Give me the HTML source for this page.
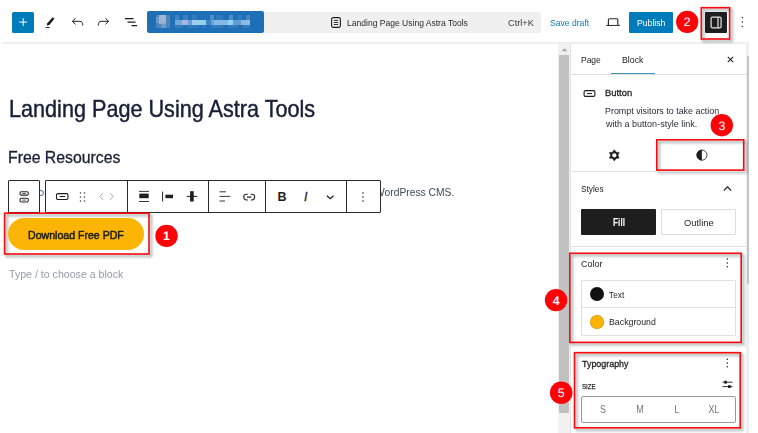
<!DOCTYPE html>
<html><head><meta charset="utf-8"><title>Landing Page Using Astra Tools</title>
<style>
*{box-sizing:border-box;margin:0;padding:0}
html,body{width:758px;height:433px;overflow:hidden;background:#fff}
body{font-family:"Liberation Sans",sans-serif;color:#1e1e1e;position:relative}
.a{position:absolute}
.t{position:absolute;white-space:nowrap;line-height:1;transform-origin:0 0}
svg{position:absolute;overflow:visible}
.rbx{filter:drop-shadow(2px 2px 1.8px rgba(30,55,55,.55))}
.mz{position:absolute;left:0;top:0;width:117px;height:22px;filter:blur(.7px)}
.mz i{position:absolute;display:block}
</style></head><body>

<!-- header -->
<div class="a" id="hdrline" style="left:2px;top:42px;width:747px;height:2px;background:#efefef"></div>
<div class="a" id="plus" style="left:12px;top:12px;width:22px;height:21px;background:#007cba;border-radius:1.500px"></div>
<svg style="left:19px;top:18px" width="8" height="8" viewBox="0 0 8 8"><path d="M4.200 .2v7.800M.3 4.100h7.800" stroke="#fff" stroke-width="1" fill="none"/></svg>
<!-- pencil -->
<svg style="left:44px;top:16px" width="12" height="13" viewBox="0 0 12 13"><path d="M8.6 1.2l1.9 1.6-5.2 6.1-2.6.9.6-2.6z" fill="#1e1e1e"/><path d="M1.5 11.6h4.2" stroke="#1e1e1e" stroke-width="1"/></svg>
<!-- undo -->
<svg style="left:71px;top:17px" width="13" height="10" viewBox="0 0 13 10"><path d="M4.6 1.2L1.4 4.3l3.2 3.1M1.6 4.3h7.2c1.8 0 2.9 1.4 2.9 3.6v.6" stroke="#1e1e1e" stroke-width="1" fill="none"/></svg>
<!-- redo -->
<svg style="left:97px;top:17px" width="13" height="10" viewBox="0 0 13 10"><path d="M8.4 1.2l3.2 3.1-3.2 3.1M11.4 4.3H4.2C2.400 4.300 1.300 5.700 1.300 7.900v.6" stroke="#1e1e1e" stroke-width="1" fill="none"/></svg>
<!-- list view -->
<svg style="left:124px;top:17px" width="14" height="10" viewBox="0 0 14 10"><path d="M.9 1.500h8.600M3.500 5.100h8M7.500 8.700h5.600" stroke="#1e1e1e" stroke-width="1.250" fill="none"/></svg>

<!-- blurred blue -->
<div class="a" id="blue" style="left:147px;top:11px;width:117px;height:22px;background:#1f6fb7;border-radius:2px;overflow:hidden"><div class="mz"><i style="left:9.1px;top:4.4px;width:14.2px;height:12.9px;background:rgba(150,175,205,.35)"></i><i style="left:12.2px;top:4.4px;width:6.9px;height:8.6px;background:rgba(185,200,220,.75)"></i><i style="left:9.1px;top:5.6px;width:4.8px;height:6.5px;background:rgba(150,175,205,.5)"></i><i style="left:13.9px;top:11.3px;width:5.1px;height:6.0px;background:rgba(140,165,195,.6)"></i><i style="left:19.0px;top:5.3px;width:4.3px;height:6.9px;background:rgba(90,135,185,.6)"></i><i style="left:27.6px;top:9.1px;width:7.7px;height:4.5px;background:#6fa8dc"></i><i style="left:35.3px;top:9.1px;width:6.0px;height:4.5px;background:#a9b7e0"></i><i style="left:41.3px;top:9.1px;width:3.4px;height:4.5px;background:#6b9fd6"></i><i style="left:44.7px;top:9.1px;width:9.4px;height:4.5px;background:#9fcdf0"></i><i style="left:54.2px;top:9.1px;width:5.1px;height:4.5px;background:#8fd0e8"></i><i style="left:59.3px;top:9.1px;width:4.3px;height:4.5px;background:#3f85c6"></i><i style="left:63.6px;top:9.1px;width:3.4px;height:4.5px;background:#6b9fd6"></i><i style="left:67.0px;top:9.1px;width:13.7px;height:4.5px;background:#86b8e4"></i><i style="left:80.8px;top:9.1px;width:5.1px;height:4.5px;background:#8fd4ee"></i><i style="left:85.9px;top:9.1px;width:7.7px;height:4.5px;background:#5f9bd3"></i><i style="left:93.6px;top:9.1px;width:9.4px;height:4.5px;background:#8cbce6"></i><i style="left:27.6px;top:4.4px;width:4.3px;height:4.6px;background:rgba(120,170,220,0.35)"></i><i style="left:36.2px;top:4.4px;width:5.1px;height:4.6px;background:rgba(120,170,220,0.3)"></i><i style="left:44.7px;top:4.4px;width:5.1px;height:4.6px;background:rgba(120,170,220,0.2)"></i><i style="left:62.8px;top:4.4px;width:4.3px;height:4.6px;background:rgba(120,170,220,0.5)"></i><i style="left:68.8px;top:4.4px;width:6.9px;height:4.6px;background:rgba(120,170,220,0.2)"></i><i style="left:81.6px;top:4.4px;width:4.3px;height:4.6px;background:rgba(120,170,220,0.5)"></i><i style="left:91.1px;top:4.4px;width:4.3px;height:4.6px;background:rgba(120,170,220,0.2)"></i><i style="left:98.8px;top:4.4px;width:4.3px;height:4.6px;background:rgba(120,170,220,0.4)"></i><i style="left:27.6px;top:13.5px;width:8.6px;height:3.8px;background:rgba(100,155,210,0.3)"></i><i style="left:39.6px;top:13.5px;width:12.0px;height:3.8px;background:rgba(100,155,210,0.25)"></i><i style="left:54.2px;top:13.5px;width:5.1px;height:3.8px;background:rgba(100,155,210,0.2)"></i><i style="left:63.6px;top:13.5px;width:12.0px;height:3.8px;background:rgba(100,155,210,0.3)"></i><i style="left:80.8px;top:13.5px;width:10.3px;height:3.8px;background:rgba(100,155,210,0.25)"></i><i style="left:96.2px;top:13.5px;width:6.9px;height:3.8px;background:rgba(100,155,210,0.3)"></i></div></div>
<!-- doc bar -->
<div class="a" id="docbar" style="left:264px;top:12px;width:277px;height:21px;background:#f0f0f0;border-radius:0 2px 2px 0"></div>
<svg style="left:331px;top:17px" width="10" height="11" viewBox="0 0 10 11"><rect x=".6" y=".6" width="8.800" height="9.800" rx="1.600" fill="none" stroke="#1e1e1e" stroke-width="1.100"/><path d="M2.800 3.500h4.400M2.800 5.500h4.400M2.800 7.500h4.400" stroke="#1e1e1e" stroke-width=".9"/></svg>
<span class="t" id="t_doc" style="left:346.82px;top:18.09px;font-size:9.8px;color:#2a2a2a;transform:scaleX(0.8713)">Landing Page Using Astra Tools</span>
<span class="t" id="t_ctrl" style="left:507.53px;top:18.09px;font-size:9.8px;color:#3a3a3a;transform:scaleX(0.9383)">Ctrl+K</span>
<span class="t" id="t_save" style="left:549.72px;top:18.09px;font-size:9.8px;color:#1278b8;transform:scaleX(0.8773)">Save draft</span>
<!-- laptop -->
<svg style="left:605px;top:17px" width="16" height="10" viewBox="0 0 16 10"><path d="M3.400 8.300V2.700a1 1 0 0 1 1-1h7.400a1 1 0 0 1 1 1V8.300" stroke="#2a2a2a" stroke-width="1.150" fill="none"/><path d="M1.300 8.450h13.600" stroke="#2a2a2a" stroke-width="1" fill="none"/></svg>
<div class="a" id="publish" style="left:629px;top:12px;width:44px;height:21px;background:#007cba;border-radius:1px"></div>
<span class="t" id="t_pub" style="left:636.99px;top:18.01px;font-size:9.8px;color:#fff;transform:scaleX(0.8846)">Publish</span>
<svg style="left:675px;top:9px" width="26" height="26" viewBox="0 0 26 26"><circle cx="12.20" cy="12.90" r="11.1" fill="#fd0207"/><text x="12.20" y="17.35" text-anchor="middle" text-rendering="geometricPrecision" font-family="Liberation Sans, sans-serif" font-size="12.3" font-weight="400" fill="#fff">2</text></svg>
<svg class="rbx" style="left:699px;top:5px" width="33" height="36" viewBox="0 0 33 36"><rect x="2.30" y="2.70" width="28.30" height="31.30" fill="none" stroke="#fb0a0f" stroke-width="1.6"/></svg>
<div class="a" style="left:705px;top:12px;width:22px;height:21px;background:#1e1e1e;border-radius:1px"></div>
<svg style="left:710px;top:17px" width="12" height="11" viewBox="0 0 12 11"><rect x="1.100" y=".2" width="10" height="10.600" rx="1.300" fill="none" stroke="#e6e6e6" stroke-width="1.200"/><path d="M8 .2v10.600" stroke="#e6e6e6" stroke-width="1.200"/></svg>
<svg style="left:741px;top:16px" width="3" height="12" viewBox="0 0 3 12"><circle cx="1.300" cy="1.500" r=".75" fill="#333"/><circle cx="1.300" cy="6" r=".75" fill="#333"/><circle cx="1.300" cy="10.500" r=".75" fill="#333"/></svg>

<!-- content -->
<span class="t" id="t_h1" style="left:8.71px;top:98.11px;font-size:23.2px;color:#182036;-webkit-text-stroke:.45px #182036;transform:scaleX(0.9325)">Landing Page Using Astra Tools</span>
<span class="t" id="t_h2" style="left:8.31px;top:150.10px;font-size:16px;color:#182036;-webkit-text-stroke:.3px #182036;transform:scaleX(0.9871)">Free Resources</span>
<span class="t" id="t_wp" style="left:374.64px;top:187.12px;font-size:10.6px;color:#3d4b5c;transform:scaleX(.9716)">WordPress CMS.</span>

<!-- block toolbar -->
<div class="a" style="left:8px;top:180px;width:32px;height:33px;border:1px solid #2a2a2a;border-radius:1px;background:#fff"></div>
<div class="a" style="left:40px;top:190px;width:4px;height:6px;overflow:hidden"><div class="a" style="left:-2px;top:0;width:6px;height:6px;border:1px solid #3a6fa8;border-radius:50%"></div></div>
<div class="a" id="tb" style="left:45px;top:180px;width:336px;height:33px;border:1px solid #2a2a2a;border-radius:1px;background:#fff"></div>
<div class="a" style="left:127px;top:180px;width:1px;height:33px;background:#2a2a2a"></div>
<div class="a" style="left:208px;top:180px;width:1px;height:33px;background:#2a2a2a"></div>
<div class="a" style="left:265px;top:180px;width:1px;height:33px;background:#2a2a2a"></div>
<div class="a" style="left:346px;top:180px;width:1px;height:33px;background:#2a2a2a"></div>
<!-- buttons group icon -->
<svg style="left:19px;top:191px" width="10" height="12" viewBox="0 0 10 12"><rect x="1.050" y=".75" width="8.200" height="3.400" rx="1.100" fill="none" stroke="#2a2a2a" stroke-width="1.100"/><rect x="1.050" y="7.250" width="8.200" height="3.700" rx="1.100" fill="none" stroke="#2a2a2a" stroke-width="1.100"/><path d="M3.400 2.450h3.500M3.400 9.100h3.500" stroke="#2a2a2a" stroke-width=".8"/></svg>
<!-- button icon -->
<svg style="left:55px;top:192px" width="13" height="7" viewBox="0 0 13 7"><g transform="translate(0.900 1.000)"><rect x=".6" y=".6" width="11.500" height="5.900" rx="1.400" fill="none" stroke="#1e1e1e" stroke-width="1.100"/><path d="M3.800 3.500h5.400" stroke="#1e1e1e" stroke-width="1"/></g></svg>
<!-- drag dots -->
<svg style="left:79px;top:192px" width="6" height="10" viewBox="0 0 6 10"><g transform="translate(0.500 0.000)"><g fill="#444"><circle cx="1" cy="1" r=".8"/><circle cx="5" cy="1" r=".8"/><circle cx="1" cy="5" r=".8"/><circle cx="5" cy="5" r=".8"/><circle cx="1" cy="9" r=".8"/><circle cx="5" cy="9" r=".8"/></g></g></svg>
<!-- < > -->
<svg style="left:99px;top:192px" width="15" height="8" viewBox="0 0 15 8"><g transform="translate(0.000 0.500)"><path d="M4.200 .5L.8 4l3.400 3.500M10.800 .5L14.200 4l-3.400 3.500" fill="none" stroke="#a0a0a0" stroke-width=".9"/></g></svg>
<!-- align top -->
<svg style="left:139px;top:191px" width="10" height="11" viewBox="0 0 10 11"><path d="M0 .4h10" stroke="#1e1e1e" stroke-width=".9"/><rect x=".3" y="2.600" width="9.400" height="4.600" fill="#1e1e1e"/><path d="M0 10.500h10" stroke="#1e1e1e" stroke-width=".9"/></svg>
<!-- justify left -->
<svg style="left:162px;top:191px" width="11" height="11" viewBox="0 0 11 11"><path d="M.6 .6v9.900" stroke="#1e1e1e" stroke-width="1"/><rect x="3.400" y="3.700" width="7.600" height="3.500" fill="#1e1e1e"/></svg>
<!-- cross -->
<svg style="left:186px;top:190px" width="11" height="12" viewBox="0 0 11 12"><g transform="translate(0.400 0.500)"><rect x="3.700" y=".7" width="3.600" height="10.300" fill="#1e1e1e"/><path d="M.3 5.900h10.600" stroke="#1e1e1e" stroke-width="1"/></g></svg>
<!-- align text -->
<svg style="left:219px;top:191px" width="11" height="11" viewBox="0 0 11 11"><g transform="translate(0.500 0.000)"><path d="M0 .8h6.500M0 5.400h10.800M0 10h5.500" stroke="#3a3a3a" stroke-width="1"/></g></svg>
<!-- link -->
<svg style="left:242px;top:192px" width="13" height="8" viewBox="0 0 13 8"><g transform="translate(0.800 1.300)"><path d="M5 .9H3.800a2.900 2.900 0 0 0 0 5.800H5M7.800 .9h1.200a2.900 2.900 0 0 1 0 5.800H7.800M4.200 3.800h4.400" fill="none" stroke="#2a2a2a" stroke-width="1.100"/></g></svg>
<span class="t" id="t_B" style="left:277.500px;top:191px;font-size:12.500px;font-weight:700;color:#1e1e1e">B</span>
<span class="t" id="t_I" style="left:304px;top:191px;font-size:12.500px;font-style:italic;color:#1e1e1e;-webkit-text-stroke:.3px #1e1e1e">I</span>
<svg style="left:326px;top:195px" width="8" height="4" viewBox="0 0 8 4"><path d="M.9 .8L4.200 3.700 7.500 .8" fill="none" stroke="#1e1e1e" stroke-width="1.250"/></svg>
<svg style="left:362px;top:192px" width="2" height="10" viewBox="0 0 2 10"><g fill="#222"><circle cx="1" cy="1" r=".8"/><circle cx="1" cy="5" r=".8"/><circle cx="1" cy="9" r=".8"/></g></svg>

<!-- button -->
<svg class="rbx" style="left:2px;top:211px" width="149" height="45" viewBox="0 0 149 45"><rect x="2.60" y="2.20" width="144.40" height="40.80" fill="none" stroke="#fb0a0f" stroke-width="1.6"/></svg>
<div class="a" id="btn" style="left:8px;top:218px;width:136px;height:32px;border-radius:16px;background:#fcb505"></div>
<span class="t" id="t_btn" style="left:28.11px;top:229.61px;font-size:10.8px;color:#1e1e1e;-webkit-text-stroke:.5px #1e1e1e;transform:scaleX(0.9798)">Download Free PDF</span>
<svg style="left:154px;top:223px" width="26" height="26" viewBox="0 0 26 26"><circle cx="12.50" cy="12.90" r="11.2" fill="#fd0207"/><text x="12.50" y="17.35" text-anchor="middle" text-rendering="geometricPrecision" font-family="Liberation Sans, sans-serif" font-size="12.3" font-weight="700" fill="#fff">1</text></svg>
<span class="t" id="t_type" style="left:8.80px;top:270.00px;font-size:10.4px;color:#949dab;transform:scaleX(1.0205)">Type / to choose a block</span>

<!-- scrollbar -->
<div class="a" style="left:558px;top:43px;width:12px;height:390px;background:#f1f1f1"></div>
<div class="a" style="left:559px;top:55px;width:10px;height:358px;background:#c1c1c1"></div>
<svg style="left:561px;top:48px" width="7" height="4" viewBox="0 0 7 4"><path d="M.5 3.300L3.500 .2 6.500 3.300z" fill="#ababab"/></svg>

<!-- sidebar -->
<div class="a" style="left:570px;top:43px;width:1px;height:390px;background:#e2e2e2"></div>
<div class="a" style="left:746px;top:43px;width:3px;height:390px;background:#eee"></div>
<div class="a" style="left:747px;top:56px;width:2px;height:228px;background:#c4c4c4"></div>
<div class="a" style="left:571px;top:73.500px;width:175px;height:1px;background:#e0e0e0"></div>
<div class="a" style="left:611px;top:73px;width:43.500px;height:1px;background:#3a95cc"></div>
<span class="t" id="t_page" style="left:581.19px;top:55.09px;font-size:9.8px;transform:scaleX(0.8644)">Page</span>
<span class="t" id="t_block" style="left:621.79px;top:55.09px;font-size:9.8px;transform:scaleX(0.8957)">Block</span>
<svg style="left:727px;top:56px" width="6" height="6" viewBox="0 0 6 6"><g transform="translate(0.500 0.500)"><path d="M.3 .3l5.400 5.400M5.700 .3L.3 5.700" stroke="#1e1e1e" stroke-width="1.050" fill="none"/></g></svg>
<svg style="left:583px;top:90px" width="12" height="7" viewBox="0 0 12 7"><g transform="translate(0.500 0.000)"><rect x=".6" y=".6" width="10.800" height="5.800" rx="1.400" fill="none" stroke="#1e1e1e" stroke-width="1.100"/><path d="M3.500 3.500h5" stroke="#1e1e1e" stroke-width="1"/></g></svg>
<span class="t" id="t_button" style="left:605.48px;top:88.01px;font-size:9.8px;-webkit-text-stroke:.3px #1e1e1e;transform:scaleX(0.9578)">Button</span>
<span class="t" id="t_p1" style="left:605.28px;top:106.08px;font-size:9.8px;color:#2b2b3a;transform:scaleX(0.9078)">Prompt visitors to take action</span>
<span class="t" id="t_p2" style="left:605.96px;top:118.53px;font-size:9.8px;color:#2b2b3a;transform:scaleX(0.9204)">with a button-style link.</span>
<svg style="left:709px;top:113px" width="26" height="26" viewBox="0 0 26 26"><circle cx="12.80" cy="12.20" r="11.2" fill="#fd0207"/><text x="12.80" y="16.65" text-anchor="middle" text-rendering="geometricPrecision" font-family="Liberation Sans, sans-serif" font-size="12.3" font-weight="400" fill="#fff">3</text></svg>
<svg class="rbx" style="left:655px;top:138px" width="91" height="34" viewBox="0 0 91 34"><rect x="1.80" y="1.80" width="86.90" height="30.30" fill="none" stroke="#fb0a0f" stroke-width="1.6"/></svg>
<!-- gear -->
<svg style="left:608px;top:149px" width="12" height="12" viewBox="-6 -6 12 12"><g transform="translate(0.300 0.300)"><polygon points="0.00,-5.60 1.80,-3.12 4.85,-2.80 3.60,0.00 4.85,2.80 1.80,3.12 0.00,5.60 -1.80,3.12 -4.85,2.80 -3.60,0.00 -4.85,-2.80 -1.80,-3.12" fill="#1e1e1e" stroke="#1e1e1e" stroke-width=".6" stroke-linejoin="round"/><circle r="2.100" fill="#fff"/></g></svg>
<!-- half circle -->
<svg style="left:696px;top:149px" width="12" height="12" viewBox="0 0 12 12"><g transform="translate(5.900 6.100)"><circle r="5.100" fill="#fff" stroke="#333" stroke-width=".9"/><path d="M0-5.300A5.300 5.300 0 0 0 0 5.300z" fill="#1e1e1e"/></g></svg>
<div class="a" style="left:571px;top:171px;width:175px;height:1px;background:#e0e0e0"></div>
<span class="t" id="t_styles" style="left:581.42px;top:184.11px;font-size:9.8px;transform:scaleX(0.8462)">Styles</span>
<svg style="left:723px;top:186px" width="8" height="5" viewBox="0 0 8 5"><g transform="translate(0.500 0.000)"><path d="M.4 4.500L4 .8l3.600 3.700" fill="none" stroke="#1e1e1e" stroke-width="1.100"/></g></svg>
<div class="a" style="left:581px;top:209px;width:74.500px;height:26px;background:#1e1e1e;border-radius:1px"></div>
<span class="t" id="t_fill" style="left:613.08px;top:218.00px;font-size:10.4px;color:#fff;font-weight:700;transform:scaleX(0.8000)">Fill</span>
<div class="a" style="left:661px;top:209px;width:74.500px;height:26px;background:#fff;border:1px solid #ddd;border-radius:1px"></div>
<span class="t" id="t_outline" style="left:683.52px;top:218.03px;font-size:9.8px;transform:scaleX(0.9533)">Outline</span>
<div class="a" style="left:571px;top:245.500px;width:175px;height:1px;background:#e0e0e0"></div>
<svg class="rbx" style="left:568px;top:251px" width="175" height="94" viewBox="0 0 175 94"><rect x="1.80" y="2.30" width="171.40" height="89.10" fill="none" stroke="#fb0a0f" stroke-width="1.6"/></svg>
<span class="t" id="t_color" style="left:581.19px;top:259.11px;font-size:9.8px;transform:scaleX(0.9231)">Color</span>
<svg style="left:726px;top:258px" width="3" height="10" viewBox="0 0 3 10"><g fill="#1e1e1e"><circle cx="1.300" cy="1" r=".75"/><circle cx="1.300" cy="4.900" r=".75"/><circle cx="1.300" cy="8.800" r=".75"/></g></svg>
<div class="a" style="left:581px;top:279.500px;width:155px;height:56px;border:1px solid #e0e0e0;border-radius:1px"></div>
<div class="a" style="left:582px;top:307px;width:153px;height:1px;background:#e0e0e0"></div>
<div class="a" style="left:590px;top:287px;width:14px;height:14px;border-radius:50%;background:#111"></div>
<div class="a" style="left:590px;top:315px;width:14px;height:14px;border-radius:50%;background:#fcb505;box-shadow:inset 0 0 0 .5px rgba(0,0,0,.2)"></div>
<span class="t" id="t_text" style="left:609.13px;top:290.08px;font-size:9.8px;transform:scaleX(0.8451)">Text</span>
<span class="t" id="t_bg" style="left:608.67px;top:317.11px;font-size:9.8px;transform:scaleX(0.8961)">Background</span>
<svg style="left:543px;top:287px" width="26" height="26" viewBox="0 0 26 26"><circle cx="13.05" cy="13.10" r="11.2" fill="#fd0207"/><text x="13.05" y="17.55" text-anchor="middle" text-rendering="geometricPrecision" font-family="Liberation Sans, sans-serif" font-size="12.3" font-weight="700" fill="#fff">4</text></svg>
<div class="a" style="left:571px;top:345px;width:175px;height:1px;background:#e0e0e0"></div>
<svg class="rbx" style="left:572px;top:350px" width="170" height="80" viewBox="0 0 170 80"><rect x="2.50" y="2.70" width="165.70" height="75.10" fill="none" stroke="#fb0a0f" stroke-width="1.6"/></svg>
<span class="t" id="t_typo" style="left:582.12px;top:359.11px;font-size:9.8px;-webkit-text-stroke:.3px #1e1e1e;transform:scaleX(0.9078)">Typography</span>
<svg style="left:726px;top:358px" width="3" height="10" viewBox="0 0 3 10"><g fill="#1e1e1e"><circle cx="1.300" cy="1.200" r=".75"/><circle cx="1.300" cy="5" r=".75"/><circle cx="1.300" cy="8.800" r=".75"/></g></svg>
<span class="t" id="t_size" style="left:582.15px;top:383.10px;font-size:8px;-webkit-text-stroke:.25px #1e1e1e;transform:scaleX(0.7543)">SIZE</span>
<svg style="left:722px;top:380px" width="10" height="9" viewBox="0 0 10 9"><g transform="translate(0.500 0.000)"><path d="M0 2.200h10M0 6.600h10" stroke="#1e1e1e" stroke-width=".9"/><rect x="1.800" y=".8" width="2.600" height="2.800" fill="#1e1e1e"/><rect x="5.600" y="5.200" width="2.600" height="2.800" fill="#1e1e1e"/></g></svg>
<div class="a" style="left:581px;top:396px;width:155px;height:27px;border:1px solid #9a9a9a;border-radius:2px"></div>
<span class="t" id="t_S" style="left:592.60px;top:405.06px;font-size:10.2px;color:#757575;width:20px;text-align:center;transform-origin:50% 0;transform:scaleX(.87)">S</span>
<span class="t" id="t_M" style="left:629.80px;top:405.06px;font-size:10.2px;color:#757575;width:20px;text-align:center;transform-origin:50% 0;transform:scaleX(.87)">M</span>
<span class="t" id="t_L" style="left:666.90px;top:405.06px;font-size:10.2px;color:#757575;width:20px;text-align:center;transform-origin:50% 0;transform:scaleX(.87)">L</span>
<span class="t" id="t_XL" style="left:704.10px;top:405.06px;font-size:10.2px;color:#757575;width:20px;text-align:center;transform-origin:50% 0;transform:scaleX(.87)">XL</span>
<svg style="left:548px;top:380px" width="26" height="26" viewBox="0 0 26 26"><circle cx="13.20" cy="12.80" r="11.3" fill="#fd0207"/><text x="13.20" y="17.25" text-anchor="middle" text-rendering="geometricPrecision" font-family="Liberation Sans, sans-serif" font-size="12.3" font-weight="400" fill="#fff">5</text></svg>

</body></html>
